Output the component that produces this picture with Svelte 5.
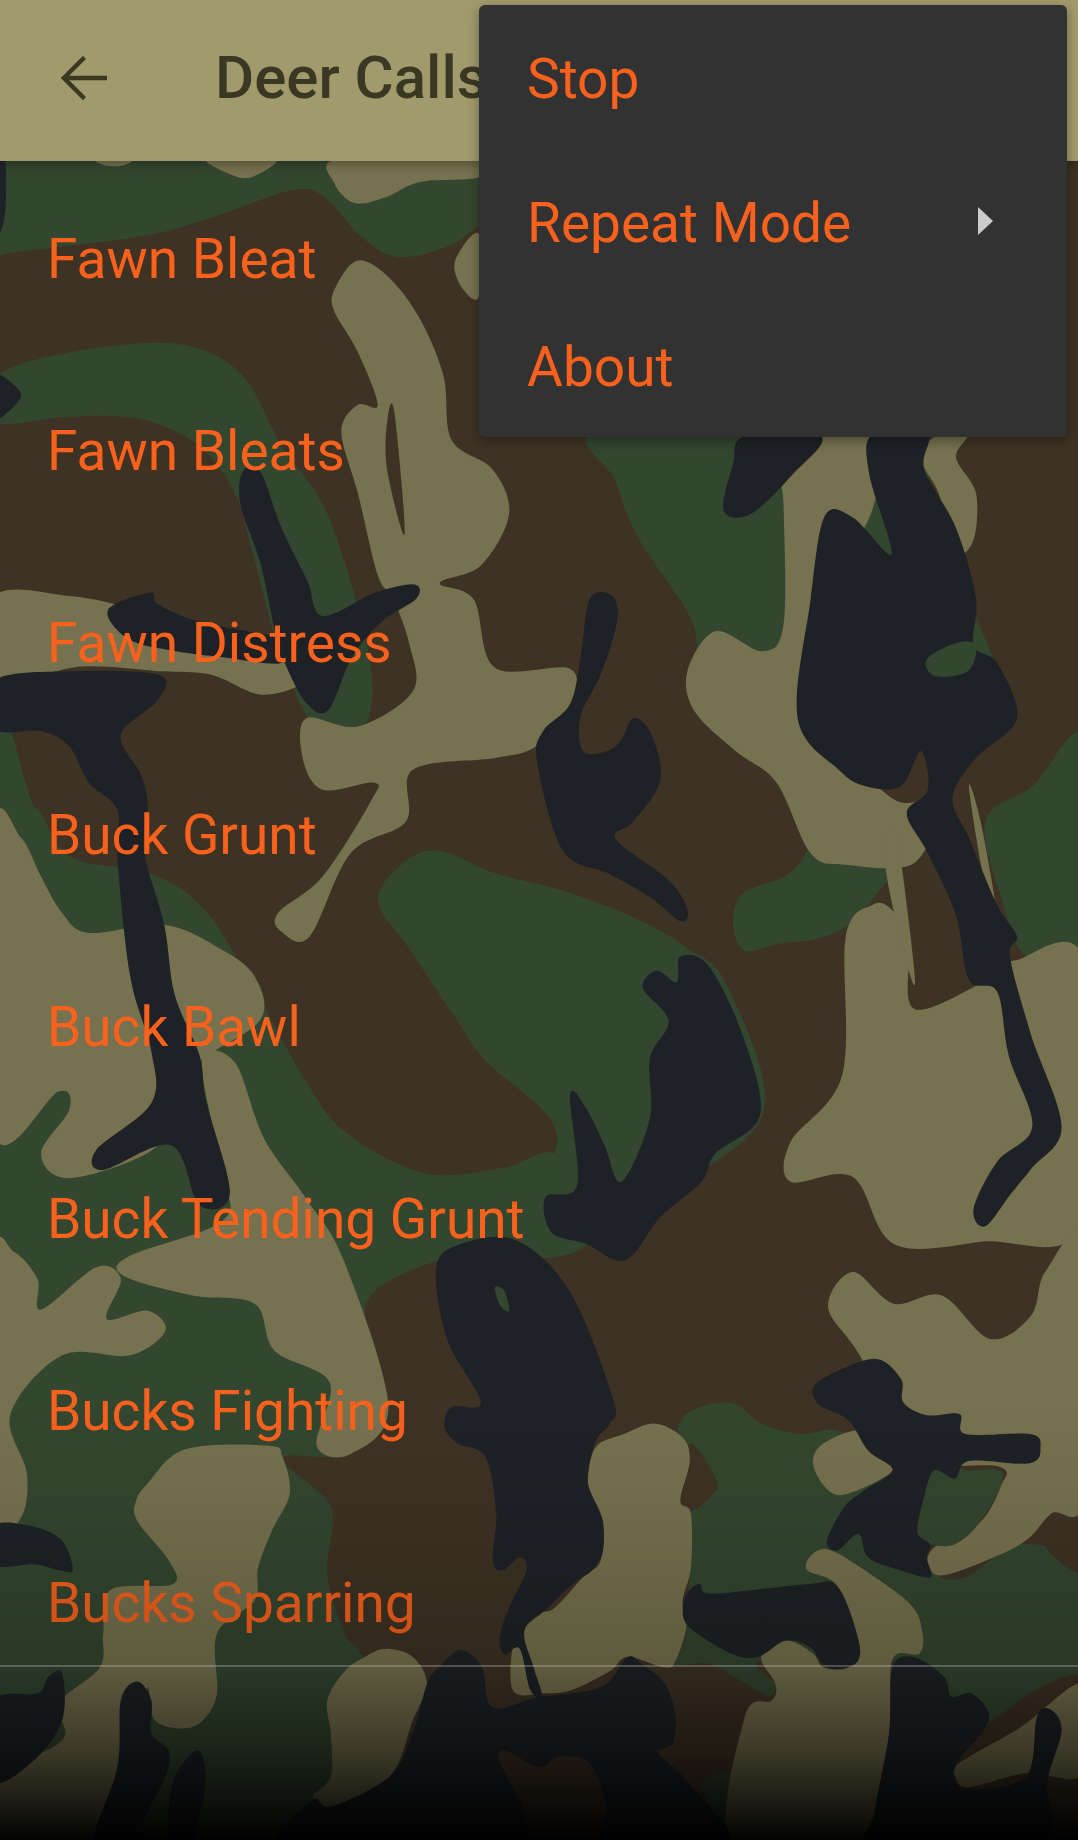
<svelte:options runes={true} />

<script lang="ts">
	const calls = [
		'Fawn Bleat',
		'Fawn Bleats',
		'Fawn Distress',
		'Buck Grunt',
		'Buck Bawl',
		'Buck Tending Grunt',
		'Bucks Fighting',
		'Bucks Sparring'
	];

	const BROWN = '#3e3224';
	const GREEN = '#33462f';
	const TAN = '#76714e';
	const BLACK = '#1e2226';

	// camo blobs, traced in a 919x1568 space; drawn in order
	const camo: [string, number[]][] = [
		[GREEN, [-5,130,420,130,420,193,408,193,382,210,338,219,305,199,279,170,250,162,176,187,117,202,6,216,-5,222]],
		[GREEN, [-5,322,60,300,150,293,205,318,240,380,280,440,315,560,310,620,270,620,240,560,215,470,200,420,170,380,120,357,60,355,-5,360]],
		[GREEN, [515,365,760,365,800,450,860,600,840,620,660,650,600,590,590,530,545,460,525,410]],
		[GREEN, [925,630,880,670,840,700,855,770,875,815,925,818]],
		[GREEN, [625,790,632,762,672,745,700,715,760,690,775,720,720,790,660,805,635,810]],
		[GREEN, [322,767,346,734,375,725,422,744,486,761,545,784,586,808,620,840,650,950,560,1020,490,1060,470,1000,475,970,462,945,415,905,390,870,350,810]],
		[GREEN, [-5,683,30,688,60,730,130,745,176,777,215,840,260,920,295,965,363,1000,430,995,475,985,500,1060,420,1075,375,1074,316,1104,316,1150,331,1198,299,1239,241,1243,282,1284,279,1341,294,1392,308,1409,330,1460,330,1575,-5,1575]],
		[GREEN, [579,1213,597,1199,626,1196,649,1213,682,1222,714,1219,740,1240,790,1330,820,1345,870,1316,925,1338,925,1429,870,1469,820,1503,770,1480,761,1415,650,1415,661,1435,657,1446,641,1438,605,1418,575,1418,585,1389,589,1290,582,1240]],
		[GREEN, [600,1517,626,1514,626,1575,622,1575,602,1532]],
		[BROWN, [588,1230,611,1262,605,1276,591,1287,582,1279]],
		[BROWN, [817,1495,925,1429,925,1575,817,1575]],
		[BROWN, [925,1279,893,1310,899,1327,925,1338]],

		[TAN, [82,136,112,136,105,141,90,141]],
		[TAN, [176,135,235,135,217,150,200,150]],
		[TAN, [289,135,408,135,408,151,358,155,329,168,302,173,285,156]],
		[TAN, [408,199,388,222,393,244,408,253]],
		[TAN, [305,222,287,243,284,263,305,300,322,345,305,345,291,368,305,420,322,490,335,510,349,549,352,589,305,619,261,612,258,646,275,673,319,667,316,683,275,747,237,778,240,794,264,798,299,727,346,700,352,656,422,646,457,636,486,602,486,570,422,569,404,511,375,497,410,482,434,438,420,400,385,375,378,320,357,270,330,235]],
		[BROWN, [336,350,345,455,330,400,330,360]],
		[TAN, [-5,508,60,508,120,520,180,535,250,555,260,580,223,592,180,575,135,572,70,568,-5,578]],
		[TAN, [665,365,750,365,745,430,720,480,700,530,690,600,760,680,800,680,780,735,721,737,691,727,662,667,627,640,592,606,586,572,610,538,650,555,668,532,668,430]],
		[TAN, [800,370,785,390,800,420,815,470,830,460,832,420,815,390,825,370]],
		[TAN, [744,771,721,798,718,916,674,973,674,1007,727,1003,762,1060,838,1058,925,1040,925,820,867,818,850,830,780,860,775,800,760,775]],
		[TAN, [758,705,766,720,780,835,770,810,755,740]],
		[TAN, [826,670,836,700,850,780,838,745]],
		[TAN, [-5,707,18,714,35,747,53,778,76,795,140,788,187,808,217,832,222,869,170,905,150,940,130,980,59,1004,35,983,59,946,50,930,-5,965]],
		[TAN, [172,905,200,905,225,970,260,1020,293,1074,331,1198,299,1239,270,1232,281,1178,234,1151,217,1111,164,1104,105,1087,111,1070,190,1040,190,1000]],
		[TAN, [-5,1074,12,1067,32,1090,35,1116,82,1080,103,1090,91,1124,126,1117,141,1134,111,1155,53,1155,9,1205,23,1256,18,1293,-5,1300]],
		[TAN, [158,1235,229,1232,241,1242,247,1273,232,1304,220,1336,217,1364,185,1392,185,1443,173,1466,156,1473,132,1466,126,1438,120,1480,85,1575,-5,1575,-5,1517,53,1483,50,1452,85,1421,88,1392,94,1355,147,1350,144,1330,117,1296,116,1279,126,1264]],
		[TAN, [329,1405,352,1412,364,1435,352,1466,332,1514,282,1539,267,1531,282,1514,282,1477,279,1449,294,1424,311,1412]],
		[TAN, [558,1213,582,1225,588,1245,580,1279,589,1290,589,1336,582,1364,585,1387,576,1415,567,1421,535,1412,520,1424,488,1440,465,1443,437,1440,440,1390,459,1375,473,1370,497,1344,512,1330,514,1296,503,1279,501,1262,508,1233,532,1222]],
		[TAN, [693,1324,708,1321,737,1338,776,1367,786,1389,784,1409,761,1414,758,1477,746,1543,746,1575,626,1575,635,1463,658,1449,661,1435,649,1412,670,1398,693,1409,702,1421,723,1421,731,1404,714,1352,688,1338]],
		[TAN, [727,1084,762,1111,803,1104,844,1141,879,1121,891,1084,925,1060,925,1272,896,1290,870,1316,811,1341,793,1338,795,1320,834,1299,853,1267,852,1250,780,1240,733,1155,706,1114]],
		[GREEN, [796,1253,826,1253,852,1253,853,1267,834,1299,814,1316,793,1316,782,1306]],
		[TAN, [732,1219,702,1230,693,1247,705,1269,723,1273,761,1253,745,1235]],
		[TAN, [925,1435,870,1472,817,1503,815,1515,826,1523,875,1511,925,1511]],

		[BLACK, [-5,135,4,135,5,170,2,193,-5,200]],
		[BLACK, [-5,320,12,328,17,340,-5,357]],
		[BLACK, [207,402,222,402,240,450,262,495,275,525,320,505,353,498,355,510,325,530,300,560,280,605,262,600,245,570,235,540,222,480,205,430]],
		[BLACK, [92,520,128,505,135,515,170,530,240,545,240,565,190,560,150,555,110,545]],
		[BLACK, [-5,580,59,572,135,575,135,596,103,626,120,660,126,687,123,727,140,788,149,848,170,899,176,939,196,1017,170,1027,146,976,88,997,82,980,129,940,129,896,111,832,100,730,100,690,76,667,59,636,35,623,-5,621]],
		[BLACK, [503,510,522,508,526,530,512,575,495,610,497,640,518,640,530,630,540,612,555,625,563,665,540,700,525,715,570,750,586,775,580,785,555,765,520,745,480,725,458,650,463,623,486,600,495,560]],
		[BLACK, [635,372,700,372,675,405,640,438,617,435,625,395]],
		[BLACK, [744,370,790,370,788,400,815,450,832,510,830,550,850,565,867,612,832,646,812,680,826,714,850,771,867,798,861,815,879,882,905,960,880,995,862,1017,840,1045,830,1030,850,990,880,960,860,900,850,845,826,835,815,780,791,727,773,693,791,673,785,640,768,670,738,670,715,656,680,612,691,511,703,440,727,441,760,472,741,404]],
		[GREEN, [790,562,815,548,832,550,825,572,797,576]],
		[BLACK, [486,933,500,945,515,975,530,1007,554,953,554,902,570,870,548,842,560,827,577,837,580,815,604,823,633,882,648,950,610,983,598,1007,563,1037,533,1074,500,1060,470,1050,465,1020,492,1010]],
		[BLACK, [393,1060,440,1057,486,1101,523,1193,520,1213,508,1228,501,1262,513,1293,514,1321,505,1338,488,1350,465,1372,447,1390,455,1421,462,1445,452,1440,443,1405,430,1410,426,1395,434,1370,449,1338,443,1327,429,1338,420,1330,423,1290,414,1242,390,1230,379,1216,385,1199,410,1195,381,1141,372,1080]],
		[GREEN, [422,1097,430,1100,434,1117,426,1112]],
		[BLACK, [744,1158,768,1175,770,1195,790,1206,818,1205,823,1222,878,1222,887,1233,878,1247,826,1245,814,1260,796,1253,787,1279,782,1306,793,1316,790,1327,793,1344,767,1338,740,1327,732,1307,714,1321,705,1313,720,1284,737,1270,761,1253,740,1236,723,1210,697,1196,697,1178]],
		[BLACK, [-5,1300,29,1301,53,1313,62,1338,50,1338,29,1333,-5,1333]],
		[BLACK, [597,1350,608,1358,688,1350,714,1352,732,1398,729,1418,705,1421,691,1404,670,1398,646,1412,623,1409,588,1387,582,1370,588,1355]],
		[BLACK, [393,1406,411,1421,420,1455,459,1446,488,1443,517,1435,535,1412,547,1418,567,1435,576,1463,573,1486,561,1494,585,1517,623,1575,520,1575,517,1540,503,1503,476,1497,459,1506,425,1495,440,1575,244,1575,267,1534,282,1540,332,1514,352,1477,364,1435,375,1420]],
		[BLACK, [53,1426,41,1429,32,1443,-5,1450,-5,1517,29,1500,53,1466]],
		[BLACK, [117,1433,129,1449,129,1477,144,1492,141,1514,123,1551,120,1575,79,1575,100,1506,103,1449]],
		[BLACK, [167,1492,175,1506,173,1534,161,1575,144,1575,147,1520]],
		[BLACK, [779,1412,805,1429,811,1446,828,1443,843,1460,837,1477,817,1500,814,1517,830,1525,875,1514,884,1463,896,1457,905,1475,893,1517,885,1575,746,1575,746,1543,758,1477,761,1421]]
	];

	// closed catmull-rom through the traced points
	function blob(n: number[]) {
		const pts: number[][] = [];
		for (let i = 0; i < n.length; i += 2) pts.push([n[i], n[i + 1]]);
		const len = pts.length;
		let d = `M${pts[0][0]} ${pts[0][1]}`;
		for (let i = 0; i < len; i++) {
			const p0 = pts[(i - 1 + len) % len];
			const p1 = pts[i];
			const p2 = pts[(i + 1) % len];
			const p3 = pts[(i + 2) % len];
			const c1x = p1[0] + (p2[0] - p0[0]) / 6;
			const c1y = p1[1] + (p2[1] - p0[1]) / 6;
			const c2x = p2[0] - (p3[0] - p1[0]) / 6;
			const c2y = p2[1] - (p3[1] - p1[1]) / 6;
			d += `C${c1x.toFixed(1)} ${c1y.toFixed(1)} ${c2x.toFixed(1)} ${c2y.toFixed(1)} ${p2[0]} ${p2[1]}`;
		}
		return d + 'Z';
	}
</script>

<div class="screen">
	<svg class="camo" viewBox="0 0 919 1568" preserveAspectRatio="none" aria-hidden="true">
		<rect width="919" height="1568" fill={BROWN} />
		{#each camo as [fill, pts]}
			<path {fill} d={blob(pts)} />
		{/each}
	</svg>

	<header class="bar">
		<svg class="back" viewBox="0 0 24 24" aria-hidden="true">
			<path d="M20 11.25H7.4l5.6-5.6L12 4.6 4.6 12l7.4 7.4 1-1.05-5.6-5.6H20v-1.5z" />
		</svg>
		<h1>Deer Calls</h1>
	</header>

	<ul class="list">
		{#each calls as call}
			<li>{call}</li>
		{/each}
	</ul>

	<div class="rule"></div>
	<div class="scrim"></div>

	<div class="menu">
		<div class="item">Stop</div>
		<div class="item">
			Repeat Mode
			<span class="arrow"></span>
		</div>
		<div class="item">About</div>
	</div>
</div>

<style>
	:global(body) {
		margin: 0;
		background: #000;
	}

	.screen {
		position: relative;
		width: 1078px;
		height: 1840px;
		overflow: hidden;
		font-family: Roboto, 'Liberation Sans', sans-serif;
		color: #f9611c;
	}

	.camo {
		position: absolute;
		inset: 0;
		width: 100%;
		height: 100%;
	}

	.bar {
		position: relative;
		display: flex;
		align-items: center;
		height: 161px;
		padding: 0 0 6px 47px;
		box-sizing: border-box;
		background: #a19a6c;
		box-shadow: 0 3px 10px rgba(0, 0, 0, 0.3);
		color: #3a3723;
	}

	.back {
		width: 72px;
		height: 72px;
		fill: currentColor;
	}

	h1 {
		margin: 0 0 0 96px;
		font-size: 60px;
		font-weight: 500;
		line-height: 1;
	}

	.list {
		position: relative;
		margin: 0;
		padding: 2px 0 0;
		list-style: none;
	}

	.list li {
		display: flex;
		align-items: center;
		height: 192px;
		padding-left: 47px;
		font-size: 55px;
	}

	.rule {
		position: absolute;
		left: 0;
		right: 0;
		top: 1665px;
		height: 2px;
		background: rgba(255, 255, 255, 0.3);
	}

	.scrim {
		position: absolute;
		left: 0;
		right: 0;
		bottom: 0;
		height: 440px;
		background: linear-gradient(
			to bottom,
			rgba(0, 0, 0, 0) 0%,
			rgba(0, 0, 0, 0.05) 23%,
			rgba(0, 0, 0, 0.2) 61%,
			rgba(0, 0, 0, 0.5) 80%,
			rgba(0, 0, 0, 0.75) 91%,
			rgba(0, 0, 0, 0.97) 100%
		);
		pointer-events: none;
	}

	.menu {
		position: absolute;
		top: 5px;
		left: 479px;
		width: 588px;
		border-radius: 6px;
		background: #323232;
		box-shadow: 0 4px 12px rgba(0, 0, 0, 0.35);
	}

	.item {
		position: relative;
		display: flex;
		align-items: center;
		box-sizing: border-box;
		height: 144px;
		padding: 4px 0 0 48px;
		font-size: 55px;
	}

	.arrow {
		position: absolute;
		left: 499px;
		top: 58px;
		border-left: 15px solid #cccccc;
		border-top: 14px solid transparent;
		border-bottom: 14px solid transparent;
	}
</style>
